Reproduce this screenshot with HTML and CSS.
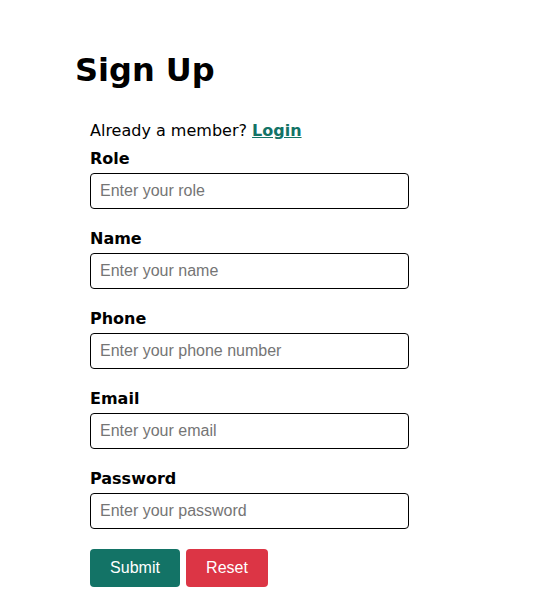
FILE: index.html
```html
<!DOCTYPE html>
<html>
<head>
<meta charset="utf-8">
<link rel="stylesheet" href="styles.css">
</head>
<body>
<div class="page">
  <h1 class="title">Sign Up</h1>
  <form class="form">
    <p class="member">Already a member? <a class="login" href="#">Login</a></p>
    <div class="field">
      <label class="label">Role</label>
      <input class="input" type="text" placeholder="Enter your role">
    </div>
    <div class="field">
      <label class="label">Name</label>
      <input class="input" type="text" placeholder="Enter your name">
    </div>
    <div class="field">
      <label class="label">Phone</label>
      <input class="input" type="text" placeholder="Enter your phone number">
    </div>
    <div class="field">
      <label class="label">Email</label>
      <input class="input" type="text" placeholder="Enter your email">
    </div>
    <div class="field">
      <label class="label">Password</label>
      <input class="input" type="password" placeholder="Enter your password">
    </div>
    <div class="actions">
      <button class="btn btn-submit" type="button">Submit</button>
      <button class="btn btn-reset" type="button">Reset</button>
    </div>
  </form>
</div>
</body>
</html>
```

FILE: styles.css
```css
html, body {
  margin: 0;
  padding: 0;
  background: #ffffff;
}
body {
  font-family: "DejaVu Sans", Verdana, sans-serif;
  color: #000;
}
.page {
  padding: 48px 0 0 75px;
}
.title {
  font-size: 32px;
  font-weight: bold;
  margin: 0 0 28px 0;
  line-height: 44px;
}
.form {
  padding-left: 15px;
  width: 319px;
}
.member {
  margin: 0;
  font-size: 16px;
  line-height: 22px;
}
.login {
  color: #137366;
  font-weight: bold;
}
.field {
  display: flex;
  flex-direction: column;
  margin-bottom: 13px;
}
.label {
  font-size: 16px;
  font-weight: bold;
  line-height: 22px;
  margin: 6px 0 3px 0;
}
.input {
  box-sizing: border-box;
  width: 319px;
  height: 36px;
  border: 1px solid #000;
  border-radius: 4px;
  padding: 0 9px;
  font-family: "Liberation Sans", Arial, sans-serif;
  font-size: 16px;
}
.input::placeholder {
  color: #757575;
}
.actions {
  display: flex;
  gap: 6px;
  margin-top: 20px;
}
.btn {
  height: 38px;
  border: none;
  border-radius: 4px;
  color: #fff;
  font-family: "Liberation Sans", Arial, sans-serif;
  font-size: 16px;
}
.btn-submit {
  width: 90px;
  background: #137366;
}
.btn-reset {
  width: 82px;
  background: #dc3545;
}
```
